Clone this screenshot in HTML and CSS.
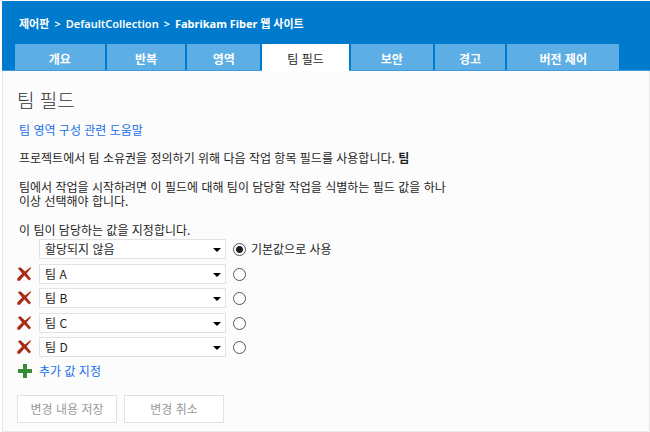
FILE: index.html
```html
<!DOCTYPE html>
<html lang="ko">
<head>
<meta charset="utf-8">
<title>팀 필드</title>
<link rel="stylesheet" href="styles.css">
</head>
<body>
<svg class="defs" width="0" height="0" aria-hidden="true">
  <symbol id="remove" viewBox="0 0 15 14">
    <path d="M.8 1.2 L3.4 .2 L8 4.4 L13 .5 L14.4 .6 L9.6 6.4 L14 11.8 L12.2 13.4 L7.4 8.6 L2.8 13.8 L.4 13.8 L.2 11.6 L5.2 6.6 Z"/>
  </symbol>
</svg>
<div class="page">
  <header class="header">
    <nav class="crumbs">
      <a href="#">제어판</a>
      <span>&gt;</span>
      <a href="#">DefaultCollection</a>
      <span>&gt;</span>
      <a href="#" class="current">Fabrikam Fiber 웹 사이트</a>
    </nav>
    <nav class="tabs">
      <a class="tab" href="#">개요</a>
      <a class="tab" href="#">반복</a>
      <a class="tab" href="#">영역</a>
      <a class="tab active" href="#">팀 필드</a>
      <a class="tab" href="#">보안</a>
      <a class="tab" href="#">경고</a>
      <a class="tab" href="#">버전 제어</a>
    </nav>
  </header>
  <main class="content">
    <h1>팀 필드</h1>
    <div class="body">
      <p class="help"><a href="#">팀 영역 구성 관련 도움말</a></p>
      <p class="owner">프로젝트에서 팀 소유권을 정의하기 위해 다음 작업 항목 필드를 사용합니다. <b>팀</b></p>
      <p class="hint">팀에서 작업을 시작하려면 이 필드에 대해 팀이 담당할 작업을 식별하는 필드 값을 하나 이상 선택해야 합니다.</p>
      <p class="prompt">이 팀이 담당하는 값을 지정합니다.</p>
    </div>
    <form>
      <div class="row">
        <span class="icon"></span>
        <span class="pick"><select aria-label="값 1"><option>할당되지 않음</option></select></span>
        <label class="default"><input type="radio" name="default" checked>기본값으로 사용</label>
      </div>
      <div class="row">
        <button type="button" class="icon" aria-label="팀 A 제거"><svg class="cross"><use href="#remove"/></svg></button>
        <span class="pick"><select aria-label="값 2"><option>팀 A</option></select></span>
        <label class="default"><input type="radio" name="default" aria-label="팀 A"></label>
      </div>
      <div class="row">
        <button type="button" class="icon" aria-label="팀 B 제거"><svg class="cross"><use href="#remove"/></svg></button>
        <span class="pick"><select aria-label="값 3"><option>팀 B</option></select></span>
        <label class="default"><input type="radio" name="default" aria-label="팀 B"></label>
      </div>
      <div class="row">
        <button type="button" class="icon" aria-label="팀 C 제거"><svg class="cross"><use href="#remove"/></svg></button>
        <span class="pick"><select aria-label="값 4"><option>팀 C</option></select></span>
        <label class="default"><input type="radio" name="default" aria-label="팀 C"></label>
      </div>
      <div class="row">
        <button type="button" class="icon" aria-label="팀 D 제거"><svg class="cross"><use href="#remove"/></svg></button>
        <span class="pick"><select aria-label="값 5"><option>팀 D</option></select></span>
        <label class="default"><input type="radio" name="default" aria-label="팀 D"></label>
      </div>
      <a class="add" href="#">
        <svg class="plus" viewBox="0 0 14 14" aria-hidden="true"><path d="M5 0h4v5h5v4H9v5H5V9H0V5h5z"/></svg>
        <span>추가 값 지정</span>
      </a>
      <div class="actions">
        <button type="submit" disabled>변경 내용 저장</button>
        <button type="reset" disabled>변경 취소</button>
      </div>
    </form>
  </main>
</div>
</body>
</html>
```
FILE: styles.css
```css
* {
  box-sizing: border-box;
}

body {
  margin: 0;
  padding: 1px 0 0 2px;
  background: #fff;
  color: #1e1e1e;
  font: 12px/14px "Noto Sans CJK KR", "Noto Sans", sans-serif;
}

a {
  color: #1a6fe8;
  text-decoration: none;
}

.defs {
  position: absolute;
}

.header {
  background: #007acc;
  border-bottom: 1px solid #3f9bdc;
}

.crumbs {
  display: flex;
  gap: 5px;
  padding: 16px 17px 0;
  height: 43px;
  color: #fff;
  font-family: "Noto Sans", "Noto Sans CJK KR", sans-serif;
  font-size: 11px;
  font-weight: 600;
}

.crumbs a {
  color: #fff;
}

.crumbs .current {
  font-weight: 700;
}

.tabs {
  display: grid;
  grid-template-columns: 90fr 79fr 73fr 87fr 82fr 71fr 112fr;
  gap: 2px;
  margin: 0 31px 0 13px;
}

.tab {
  padding: 8px 0 4px;
  background: #5caee5;
  color: #fff;
  font-weight: 700;
  text-align: center;
}

.tab.active {
  margin-bottom: -1px;
  padding-bottom: 5px;
  background: #fff;
  color: #1e1e1e;
  font-weight: 400;
}

.content {
  padding: 16px 14px 8px;
  background: #fcfcfc;
  border: solid #e9e9e9;
  border-width: 0 1px 2px;
}

h1 {
  margin: 0;
  color: #333;
  font-size: 19px;
  font-weight: 300;
  line-height: 26px;
}

.body {
  padding-left: 2px;
}

p {
  max-width: 440px;
  margin: 0;
  word-break: keep-all;
}

.help {
  margin-top: 10px;
}

.owner {
  margin-top: 14px;
}

.hint {
  margin-top: 15px;
}

.prompt {
  margin: 15px 0 2px;
}

.row {
  display: flex;
  align-items: center;
  height: 20px;
  margin-bottom: 4px;
}

.row:nth-child(odd) {
  margin-bottom: 5px;
}

.icon {
  flex: none;
  width: 22px;
  height: 14px;
  padding: 0;
  border: 0;
  background: none;
  text-align: left;
}

.cross {
  display: block;
  width: 15px;
  height: 14px;
  fill: #a92b12;
}

.pick {
  position: relative;
  width: 187px;
}

.pick::after {
  content: "";
  position: absolute;
  top: 9px;
  right: 5px;
  width: 8px;
  height: 4px;
  background: #000;
  clip-path: polygon(0 0, 100% 0, 50% 100%);
  pointer-events: none;
}

select {
  display: block;
  appearance: none;
  width: 100%;
  height: 20px;
  padding: 0 16px 0 5px;
  border: 1px solid #e2e2e2;
  border-radius: 0;
  background: #fff;
  color: #1e1e1e;
  font: inherit;
}

.default {
  display: flex;
  align-items: center;
  gap: 5px;
  margin-left: 7px;
}

input {
  appearance: none;
  width: 13px;
  height: 13px;
  margin: 0;
  border: 1px solid #555;
  border-radius: 50%;
  background: #fff;
}

input:checked {
  background: radial-gradient(circle, #1e1e1e 3px, #fff 4px);
}

.add {
  display: flex;
  align-items: center;
  gap: 7px;
  margin-top: 7px;
}

.plus {
  width: 14px;
  height: 14px;
  margin-left: 1px;
  fill: #388a34;
}

.actions {
  display: flex;
  gap: 7px;
  margin-top: 17px;
}

.actions button {
  width: 100px;
  height: 28px;
  padding: 0;
  border: 1px solid #e2e2e2;
  background: #fff;
  color: #999;
  font: inherit;
}
```
